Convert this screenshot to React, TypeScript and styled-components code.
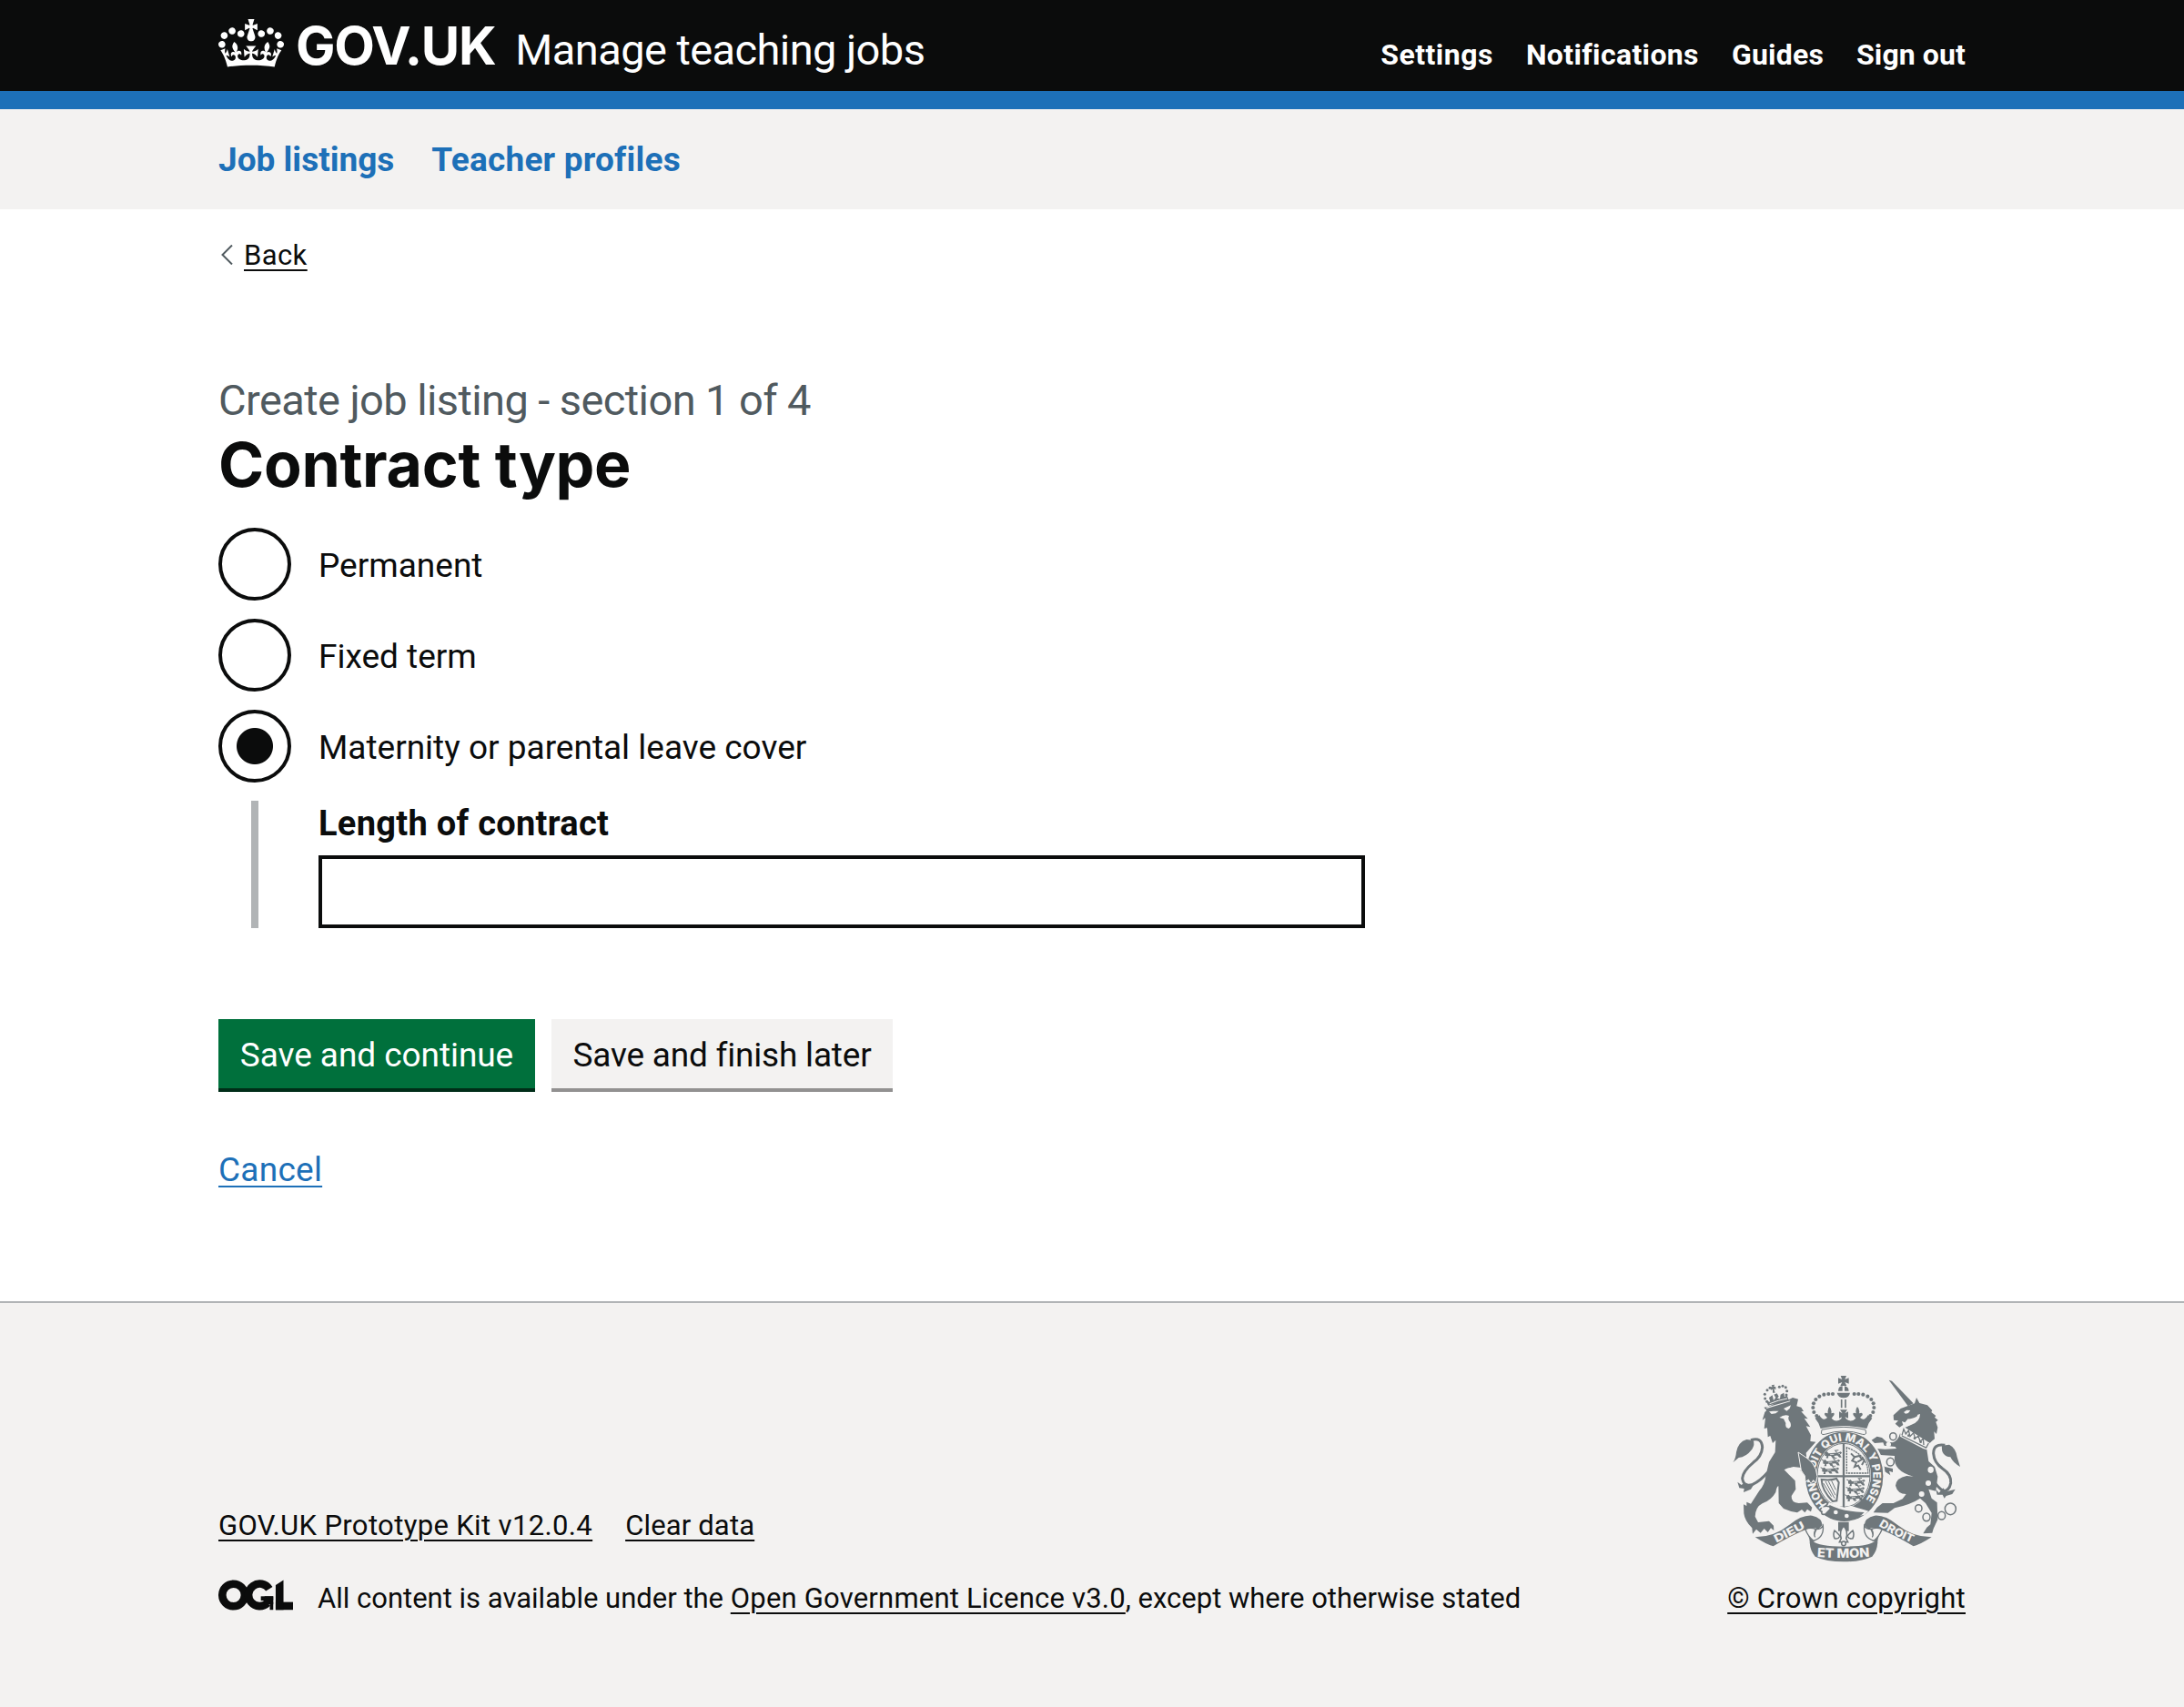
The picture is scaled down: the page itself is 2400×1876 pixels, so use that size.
import React, { useState } from 'react';
import styled, { createGlobalStyle, css } from 'styled-components';

const ink = '#0b0c0c';
const blue = '#1d70b8';
const pale = '#f3f2f1';
const crest = '#6f777b';

const GlobalStyle = createGlobalStyle`
  body {
    margin: 0;
    background: #fff;
    color: ${ink};
    font-family: Roboto, 'Liberation Sans', sans-serif;
  }
`;

const Page = styled.div`
  display: flex;
  flex-direction: column;
  min-height: 1876px;
`;

/* Header */

const Header = styled.header`
  box-sizing: border-box;
  height: 120px;
  padding: 20px 240px 0;
  display: flex;
  align-items: baseline;
  justify-content: space-between;
  background: ${ink};
  border-bottom: 20px solid ${blue};
  color: #fff;
`;

const Brand = styled.div`
  display: flex;
  align-items: baseline;
`;

const CrownMark = styled.svg`
  align-self: flex-start;
  width: 72px;
  height: 53px;
  margin: 1px 13px 0 0;
  fill: currentColor;
`;

const Wordmark = styled.span`
  font: 700 58px/60px Inter, sans-serif;
  letter-spacing: -1.3px;
  margin-right: 22px;
`;

const Service = styled.span`
  font-size: 47px;
  line-height: 50px;
  letter-spacing: -0.58px;
`;

const Account = styled.nav`
  display: flex;
  gap: 36px;
`;

const AccountLink = styled.a<{ $tracking: number }>`
  font-size: 32px;
  line-height: 40px;
  font-weight: 700;
  letter-spacing: ${(p) => p.$tracking}px;
`;

const PrimaryNav = styled.nav`
  box-sizing: border-box;
  height: 110px;
  padding: 31px 240px 0;
  display: flex;
  gap: 41px;
  background: ${pale};
`;

const PrimaryLink = styled.a<{ $tracking?: number }>`
  color: ${blue};
  font-size: 37px;
  line-height: 50px;
  font-weight: 700;
  letter-spacing: ${(p) => p.$tracking ?? 0}px;
`;

/* Links */

const underlined = css`
  text-decoration: underline;
  text-decoration-thickness: 2px;
  text-underline-offset: 5px;
`;

const Link = styled.a<{ $tracking?: number }>`
  ${underlined}
  letter-spacing: ${(p) => p.$tracking ?? 0}px;
`;

/* Main */

const Main = styled.main`
  box-sizing: border-box;
  height: 1200px;
  padding: 31px 240px 0;
`;

const BackLink = styled.div`
  display: flex;
  align-items: center;
  gap: 12px;
  padding-left: 3px;
  margin-bottom: 109px;
  font-size: 31px;
  line-height: 40px;
`;

const Chevron = styled.svg`
  width: 13px;
  height: 22px;
  margin-bottom: 2px;
  fill: none;
  stroke: #505a5f;
  stroke-width: 2;
`;

const Caption = styled.div`
  color: #505a5f;
  font-size: 47px;
  line-height: 60px;
  letter-spacing: -0.59px;
`;

const Title = styled.h1`
  margin: 0 0 30px;
  font: 700 68px/80px Inter, sans-serif;
  letter-spacing: -0.3px;
`;

const Radios = styled.div`
  display: flex;
  flex-direction: column;
  gap: 20px;
`;

const RadioRow = styled.label`
  display: flex;
  align-items: center;
  gap: 30px;
  height: 80px;
`;

const RadioInput = styled.input`
  appearance: none;
  flex: none;
  box-sizing: border-box;
  width: 80px;
  height: 80px;
  margin: 0;
  border: 4px solid ${ink};
  border-radius: 50%;
  background: #fff;

  &:checked {
    background: radial-gradient(circle, ${ink} 19.5px, #fff 20.5px);
  }
`;

const RadioText = styled.span`
  padding-top: 3px;
  font-size: 37px;
  line-height: 40px;
`;

const Conditional = styled.div`
  box-sizing: border-box;
  width: 1224px;
  height: 140px;
  margin-left: 36px;
  padding: 5px 0 0 66px;
  border-left: 8px solid #b1b4b6;
  display: flex;
  flex-direction: column;
  gap: 15px;
`;

const FieldLabel = styled.label`
  font-size: 38px;
  line-height: 40px;
  font-weight: 700;
  letter-spacing: 0.3px;
`;

const TextInput = styled.input`
  box-sizing: border-box;
  width: 100%;
  height: 80px;
  margin: 0;
  padding: 10px;
  border: 4px solid ${ink};
  border-radius: 0;
  background: #fff;
  font: 37px Roboto, sans-serif;
`;

const Actions = styled.div`
  display: flex;
  gap: 18px;
  margin: 100px 0 66px;
`;

const Button = styled.button<{ $secondary?: boolean }>`
  box-sizing: border-box;
  width: ${(p) => (p.$secondary ? 375 : 348)}px;
  height: 80px;
  padding: 3px 0 0;
  border: 0;
  border-bottom: 4px solid ${(p) => (p.$secondary ? '#929191' : '#002d18')};
  background: ${(p) => (p.$secondary ? pale : '#00703c')};
  color: ${(p) => (p.$secondary ? ink : '#fff')};
  font: 37px/40px Roboto, sans-serif;
  letter-spacing: ${(p) => (p.$secondary ? -0.2 : -0.06)}px;
  white-space: nowrap;
`;

const Cancel = styled(Link)`
  display: inline-block;
  color: ${blue};
  font-size: 37px;
  line-height: 40px;
`;

/* Footer */

const Footer = styled.footer`
  flex: 1;
  padding: 0 240px 99px;
  border-top: 2px solid #b1b4b6;
  background: ${pale};
  display: flex;
  justify-content: space-between;
  align-items: flex-end;
  font-size: 31px;
  line-height: 40px;
`;

const FooterMeta = styled.div`
  display: flex;
  flex-direction: column;
  gap: 40px;
`;

const FooterLinks = styled.div`
  display: flex;
  gap: 36px;
`;

const Licence = styled.div`
  display: flex;
  align-items: flex-start;
  gap: 27px;
`;

const LicenceText = styled.span`
  letter-spacing: 0;
`;

const OglMark = styled.svg`
  width: 82px;
  height: 34px;
  margin-top: -1px;
`;

const Copyright = styled.div`
  display: flex;
  flex-direction: column;
  align-items: flex-end;
  gap: 18px;
`;

const Arms = styled.svg`
  width: 260px;
  height: 209px;
  font-family: Inter, sans-serif;
  font-weight: 800;
`;

const Crown = () => (
  <CrownMark viewBox="0 0 132 97" aria-hidden="true">
    <path
      fillRule="evenodd"
      d="M25 30.2c3.5 1.5 7.7-.2 9.1-3.7 1.5-3.6-.2-7.8-3.9-9.2-3.6-1.4-7.6.3-9.1 3.9-1.4 3.5.3 7.5 3.9 9zM9 39.5c3.6 1.5 7.8-.2 9.2-3.7 1.5-3.6-.2-7.8-3.9-9.1-3.6-1.5-7.6.2-9.1 3.8-1.4 3.5.3 7.5 3.8 9zM4.4 57.2c3.5 1.5 7.7-.2 9.1-3.8 1.5-3.6-.2-7.7-3.9-9.1-3.5-1.5-7.6.3-9.1 3.8-1.4 3.5.3 7.6 3.9 9.1zm38.3-21.4c3.5 1.5 7.7-.2 9.1-3.8 1.5-3.6-.2-7.7-3.9-9.1-3.6-1.5-7.6.3-9.1 3.8-1.3 3.6.4 7.7 3.9 9.1zm64.4-5.6c-3.6 1.5-7.8-.2-9.1-3.7-1.5-3.6.2-7.8 3.8-9.2 3.6-1.4 7.7.3 9.2 3.9 1.3 3.5-.4 7.5-3.9 9zm15.9 9.3c-3.6 1.5-7.7-.2-9.1-3.7-1.5-3.6.2-7.8 3.7-9.1 3.6-1.5 7.7.2 9.2 3.8 1.5 3.5-.3 7.5-3.8 9zm4.7 17.7c-3.6 1.5-7.8-.2-9.2-3.8-1.5-3.6.2-7.7 3.9-9.1 3.6-1.5 7.7.3 9.2 3.8 1.3 3.5-.4 7.6-3.9 9.1zM89.3 35.8c-3.6 1.5-7.8-.2-9.2-3.8-1.4-3.6.2-7.7 3.9-9.1 3.6-1.5 7.7.3 9.2 3.8 1.4 3.6-.3 7.7-3.9 9.1zM69.7 17.7l8.9 4.7V9.3l-8.9 2.8c-.2-.3-.5-.6-.9-.9L72.4 0H59.6l3.5 11.2c-.3.3-.6.5-.9.9l-8.8-2.8v13.1l8.8-4.7c.3.3.6.7.9.9l-5 15.4v.1c-.2.8-.4 1.6-.4 2.4 0 4.1 3.1 7.5 7 8.1h.2c.3 0 .7.1 1 .1.4 0 .7 0 1-.1h.2c4-.6 7.1-4.1 7.1-8.1 0-.8-.1-1.7-.4-2.4V34l-5.1-15.4c.4-.2.7-.6 1-.9zM66 92.8c16.9 0 32.8 1.1 47.1 3.2 4-16.9 8.9-26.7 14-33.5l-9.6-3.4c1 4.9 1.1 7.2 0 10.2-1.5-1.4-3-4.3-4.2-8.7L108.6 76c2.8-2 5-3.2 7.5-3.3-4.4 9.4-10 11.9-13.6 11.2-4.3-.8-6.3-4.6-5.6-7.9 1-4.7 5.7-5.9 8-.5 4.3-8.7-3-11.4-7.6-8.8 7.1-7.2 7.9-13.5 2.1-21.1-8 6.1-8.1 12.3-4.5 20.8-4.7-5.4-12.1-2.5-9.5 6.2 3.4-5.2 7.9-2 7.2 3.1-.6 4.3-6.4 7.8-13.5 7.2-10.3-.9-10.9-8-11.2-13.8 2.5-.5 7.1 1.8 11 7.3L80.2 60c-4.1 4.4-8 5.3-12.3 5.4 1.4-4.4 8-11.6 8-11.6H55.5s6.4 7.2 7.9 11.6c-4.2-.1-8-1-12.3-5.4l1.4 16.4c3.9-5.5 8.5-7.7 10.9-7.3-.3 5.8-.9 12.8-11.1 13.8-7.2.6-12.9-2.9-13.5-7.2-.7-5 3.8-8.3 7.1-3.1 2.7-8.7-4.6-11.6-9.4-6.2 3.7-8.5 3.6-14.7-4.6-20.8-5.8 7.6-5 13.9 2.2 21.1-4.7-2.6-11.9.1-7.7 8.8 2.3-5.5 7.1-4.2 8.1.5.7 3.3-1.3 7.1-5.7 7.9-3.5.7-9-1.8-13.5-11.2 2.5.1 4.7 1.3 7.5 3.3l-4.7-15.4c-1.2 4.4-2.7 7.2-4.3 8.7-1.1-3-.9-5.3 0-10.2l-9.5 3.4c5 6.9 9.9 16.7 14 33.5 14.8-2.1 30.8-3.2 47.7-3.2z"
    />
  </CrownMark>
);

/* Open ring, hooked ring and an angled bar, as in the licence symbol. */
const Ogl = () => (
  <OglMark viewBox="0 0 483.2 195.7" aria-hidden="true">
    <g fill="none" stroke={ink} strokeWidth="50.7">
      <circle cx="97.8" cy="97.8" r="72.5" />
      <path d="M329 58.5A72.5 72.5 0 1 0 318 149" />
    </g>
    <g fill={ink}>
      <rect x="275" y="105.7" width="80" height="27.6" />
      <rect x="299" y="105.7" width="56" height="52" />
      <rect x="333" y="140" width="22" height="53.5" />
      <rect x="370.8" y="142.8" width="112.4" height="50.7" />
      <polygon points="370.8,193 370.8,32.4 421.5,0.1 421.5,193" />
    </g>
  </OglMark>
);

const crownDots = [
  [402, 126], [388, 126], [373, 128], [358, 134], [346, 144], [339, 157], [337, 171], [340, 186], [349, 198],
];
const lionDots = [
  [186, 113], [195, 106], [226, 103], [237, 100], [247, 104], [251, 116], [178, 127], [179, 141], [185, 151], [249, 129],
];
const chain = [
  [601, 266, 11], [592, 350, 12], [725, 376, 12], [685, 503, 11], [711, 532, 12], [761, 527, 12], [790, 505, 18],
];

/* One heraldic beast, drawn small, repeated in rows on the shield. */
const Passant = ({ x, y }: { x: number; y: number }) => (
  <g transform={`translate(${x} ${y}) scale(1.25 1.15)`}>
    <path
      d="M0 12V3L6 0L10 5L34 3L42 0L45 4L40 8L44 17H38L33 11L24 12L27 18H20L16 12L9 13V19H3L5 13Z"
      fill={crest}
    />
    <path d="M32 3L27 -3L36 -4M1 3L-4 0M10 8H30" fill="none" stroke={crest} strokeWidth="2.5" />
    <path d="M14 8H24M36 6H40" stroke={pale} strokeWidth="2" />
  </g>
);

const CoatOfArms = () => (
  <Arms viewBox="60 60 780 627" role="img" aria-label="Royal coat of arms">
    <defs>
      <path id="garter" d="M382 490A96 116 0 1 1 493 493" />
      <path id="ribbonLeft" d="M216 617Q264 594 326 560" />
      <path id="ribbonMid" d="M350 663Q438 670 530 662" />
      <path id="ribbonRight" d="M553 560Q606 594 676 622" />
    </defs>

    {/* lion */}
    <g fill={crest}>
      <path d="M175 170L190 168Q225 148 260 143L270 138L288 143L283 166L298 170L306 183L298 184L320 208L308 206L328 235L314 232L330 262L328 282L346 284L330 302L314 320L316 338Q336 350 345 370L350 398L345 425L338 412L330 425L322 408L312 418L310 398L300 382L290 374Q262 362 242 376L258 392L278 412L280 440L266 462Q264 484 290 486L318 484L334 500L330 514L318 506L310 517L300 507L285 517Q262 514 240 504L224 486L223 430Q218 428 214 450Q200 476 170 487Q148 498 146 530L156 549L192 545L207 560L208 576L198 568L188 582L176 570L164 584L150 572L138 587L136 568Q112 545 109 520L108 490L118 495L118 482L132 488L160 445Q178 425 182 392L192 350L212 318L214 278L204 288L196 264L188 268L186 238L176 240L180 205L170 212L178 186L184 180Z" />
      <path d="M73 352Q82 340 84 318Q90 284 118 276L140 279Q146 292 136 308Q116 334 92 336Z" />
      <path d="M88 416L101 426L112 418L128 426L146 418L132 440L108 450L110 438L94 436Z" />
    </g>
    <path
      d="M132 278Q168 266 170 302Q168 332 140 352Q106 380 104 404Q108 434 138 424Q164 412 188 384"
      fill="none"
      stroke={crest}
      strokeWidth="9"
    />
    <g fill={pale}>
      <path d="M192 184L206 182L224 182L214 190L200 192ZM240 174L264 163L260 174L250 182Z" />
      <path d="M226 204Q242 192 258 198Q252 208 262 220Q268 234 257 240Q244 238 247 222L240 208Z" />
      <path d="M248 374L272 366L304 370L296 378L276 376L286 388L268 384L266 396Z" />
      <path d="M183 170L262 148L261 151L184 174Z" />
    </g>
    <g fill={crest}>
      {lionDots.map(([x, y]) => (
        <circle key={`${x}-${y}`} cx={x} cy={y} r="4.5" />
      ))}
      <path d="M200 97L210 95L208 102L214 102V112L208 108L212 122L204 122L204 110L198 113L197 103L203 103Z" />
      <path d="M189 164L183 149L196 152L192 138L203 130L207 147L214 138L208 128L218 124L224 134L219 140L228 142L230 128L241 122L243 136L251 130L257 146Z" />
    </g>
    <path d="M194 158Q222 146 252 141" fill="none" stroke={pale} strokeWidth="3" />

    {/* unicorn */}
    <g fill={crest}>
      <path d="M587 80L597 83L668 157L650 166Z" />
      <path d="M652 164L672 157L678 138L688 156L714 163L730 180L727 186L742 198L738 203L749 212L742 218L748 236L744 258L736 250L738 274L728 282L722 288L640 236Q672 226 688 196Q664 210 650 208L640 220L630 216L634 228L622 236L608 224L618 214L603 212L602 196L626 174Z" />
      <path d="M624 256L712 308L718 348L738 366L748 398L742 446L718 440L728 470L746 484L748 540L734 570L730 584L700 586L712 566L724 556L728 518L708 486L690 470Q660 490 606 502L584 518L536 517L548 500L566 486L602 486L632 472L644 456Q616 456 609 428Q612 402 646 396L668 398Q600 380 606 330L570 328L552 326L552 346L574 366L600 372L600 384L588 380L592 394L574 382L570 392L562 372L540 346L528 340L528 322L546 306L574 308L612 306L608 300L572 296L568 286L540 288L530 278L548 266L564 270L580 284L600 286Q618 280 624 256Z" />
      <path d="M822 366Q798 352 790 334Q758 330 762 296L786 293Q808 304 812 334Z" />
      <path d="M742 440L752 452L766 436L776 448L806 440L796 456L776 462L770 470L764 458L746 458Z" />
    </g>
    <path
      d="M772 295Q734 288 734 322Q736 352 764 372Q794 392 791 420Q786 446 766 446Q744 430 734 410"
      fill="none"
      stroke={crest}
      strokeWidth="9"
    />
    <g fill={pale}>
      <path d="M636 186L646 179L658 180L651 189L642 191ZM690 192Q690 218 660 228L640 236L662 218Q678 208 682 194Z" />
      <path d="M628 238L636 236L720 288L722 296L712 310L700 306L624 266Z" />
    </g>
    <path d="M630 264L710 303L718 288M630 262L636 242L643 258L652 246L657 266L668 254L674 272L684 264L690 282L700 274L702 294" fill="none" stroke={crest} strokeWidth="4" />
    <circle cx="652" cy="263" r="4" fill={crest} />
    <circle cx="672" cy="272" r="4" fill={crest} />
    <circle cx="692" cy="284" r="4" fill={crest} />
    {chain.map(([x, y, r]) => (
      <ellipse key={`${x}-${y}`} cx={x} cy={y} rx={r} ry={r + 1} fill={pale} stroke={crest} strokeWidth="4.5" />
    ))}
    <circle cx="717" cy="420" r="9" fill={pale} />
    <circle cx="695" cy="456" r="9" fill={pale} />
    <circle cx="586" cy="292" r="8" fill={pale} />

    {/* garter and shield */}
    <ellipse cx="440" cy="397" rx="135" ry="155" fill={pale} />
    <ellipse cx="440" cy="397" rx="128" ry="149" fill={crest} />
    <ellipse cx="438" cy="394" rx="90" ry="108" fill={pale} />
    <text fill={pale} fontSize="36">
      <textPath href="#garter" textLength="520" lengthAdjust="spacingAndGlyphs">
        HONI SOIT QUI MAL Y PENSE
      </textPath>
    </text>
    <path d="M438 288V500M350 397H525" stroke={crest} strokeWidth="7" />
    <ellipse cx="438" cy="394" rx="87" ry="105" fill="none" stroke={crest} strokeWidth="3" />
    <Passant x={376} y={316} />
    <Passant x={370} y={342} />
    <Passant x={367} y={368} />
    <Passant x={453} y={408} />
    <Passant x={451} y={433} />
    <Passant x={447} y={458} />
    <g fill="none" stroke={crest}>
      <path d="M448 302V387H518Q520 330 448 302Z" strokeWidth="4" strokeDasharray="7 2" />
      <path d="M462 322L474 334L466 346L480 352L474 366L486 362L494 376M474 334L490 330L498 342L484 350M498 360L506 346L500 336" strokeWidth="6" />
      <path d="M365 408Q394 412 414 405L422 418L415 478L402 480Q366 444 365 408Z" strokeWidth="6" />
      <path d="M378 414L408 470M388 414L411 460M398 412L412 442M371 420L398 464" strokeWidth="3" />
    </g>

    {/* lion's forepaw over the garter */}
    <path
      d="M288 318L318 338Q338 352 346 374L351 398L346 420L338 410L330 422L322 408L312 416L310 396L298 378Z"
      fill={crest}
      stroke={pale}
      strokeWidth="3"
    />

    {/* belt and buckle */}
    <path d="M370 502Q430 542 508 524L520 512L506 508L480 500L462 494L440 500L392 484Z" fill={pale} />
    <path d="M392 492Q436 514 506 516Q480 546 430 542Q402 536 376 520Z" fill={crest} />
    <circle cx="412" cy="516" r="7" fill={pale} />
    <circle cx="448" cy="528" r="7" fill={pale} />
    <path d="M368 488Q386 476 384 490L376 496Q396 494 394 506L378 522Q362 526 366 514Q354 508 366 502" fill={pale} stroke={crest} strokeWidth="5" />

    {/* imperial crown */}
    <path d="M362 240Q438 224 514 240L516 264Q510 270 500 266Q438 236 376 266Q366 268 360 262Z" fill={pale} />
    <g fill={crest}>
      <path d="M428 66H447L442 78L455 73V92L442 87L448 99H427L433 87L420 92V73L433 78Z" />
      <path d="M420 116Q420 100 434 100V116ZM441 100Q455 102 455 116H441ZM416 122H459Q456 139 438 139Q420 139 416 122Z" />
      {crownDots.map(([x, y]) => (
        <g key={`${x}-${y}`}>
          <circle cx={x} cy={y} r="6.2" />
          <circle cx={875 - x} cy={y} r="6.2" />
        </g>
      ))}
      <path d="M344 206L358 196Q370 218 384 204L376 196Q372 184 386 190Q384 176 391 168Q400 176 397 190Q410 184 406 196L398 206Q412 222 430 208L434 196L440 196L446 208Q464 222 478 206L470 196Q466 184 479 190Q476 176 483 168Q492 176 489 190Q502 184 500 196L492 204Q506 218 518 196L532 206Q518 222 514 240Q438 222 362 240Q358 222 344 206Z" />
      <path d="M426 178H450L442 190L453 184V206L440 200V206H436V200L423 206V184L434 190Z" />
    </g>
    <path d="M431 144V172M444 144V172" stroke={crest} strokeWidth="5" />
    <path d="M366 244Q438 226 510 244L512 256Q507 262 500 259Q438 238 376 259Q368 262 364 256Z" fill={pale} stroke={crest} strokeWidth="3" />

    {/* ribbon */}
    <g fill={crest}>
      <path d="M146 598Q208 598 258 558Q300 524 334 527Q366 534 368 558L354 572Q336 562 306 576Q262 594 206 628Q190 626 146 598Z" />
      <path d="M728 598Q666 598 616 558Q574 524 540 527Q508 534 506 558L520 572Q538 562 568 576Q612 594 668 628Q684 626 728 598Z" />
      <path d="M310 574Q328 600 326 616Q328 644 344 662Q380 679 438 679Q496 679 532 662Q548 644 550 616Q548 600 566 574L558 572Q530 600 540 612Q522 628 438 629Q354 628 338 612Q346 600 318 572Z" />
    </g>
    <g fill={pale} stroke={crest} strokeWidth="4">
      <path d="M312 572Q330 564 346 572Q338 586 344 596Q352 606 338 610Q318 592 312 572Z" />
      <path d="M564 572Q546 564 530 572Q538 586 532 596Q524 606 538 610Q558 592 564 572Z" />
      <path d="M338 610Q374 600 370 560Q364 572 348 572Q338 592 344 598" />
      <path d="M538 610Q502 600 506 560Q512 572 528 572Q538 592 532 598" />
    </g>
    <g fill={pale} fontSize="37">
      <text>
        <textPath href="#ribbonLeft" textLength="108" lengthAdjust="spacingAndGlyphs">
          DIEU
        </textPath>
      </text>
      <text fontSize="42">
        <textPath href="#ribbonMid" textLength="174" lengthAdjust="spacingAndGlyphs">
          ET MON
        </textPath>
      </text>
      <text>
        <textPath href="#ribbonRight" textLength="124" lengthAdjust="spacingAndGlyphs">
          DROIT
        </textPath>
      </text>
    </g>

    {/* badge below the garter */}
    <path d="M420 548H455V578H446L438 564L430 578H420Z" fill={crest} />
    <g fill={pale} stroke={crest} strokeWidth="4.5">
      <path d="M432 602Q418 584 408 576Q402 588 408 602Q420 606 424 596M444 602Q458 584 468 576Q474 588 468 602Q456 606 452 596" />
      <path d="M438 562Q454 578 446 602L452 614H424L430 602Q422 578 438 562Z" />
      <circle cx="438" cy="619" r="7" />
    </g>
  </Arms>
);

const accountLinks: [string, number][] = [
  ['Settings', 0.5],
  ['Notifications', 0.35],
  ['Guides', 0.2],
  ['Sign out', 0.1],
];

const contractTypes = ['Permanent', 'Fixed term', 'Maternity or parental leave cover'];

export default function App() {
  const [selected, setSelected] = useState(contractTypes[2]);
  return (
    <Page>
      <GlobalStyle />
      <Header>
        <Brand>
          <Crown />
          <Wordmark>GOV.UK</Wordmark>
          <Service>Manage teaching jobs</Service>
        </Brand>
        <Account>
          {accountLinks.map(([label, tracking]) => (
            <AccountLink key={label} $tracking={tracking}>
              {label}
            </AccountLink>
          ))}
        </Account>
      </Header>
      <PrimaryNav>
        <PrimaryLink>Job listings</PrimaryLink>
        <PrimaryLink $tracking={0.2}>Teacher profiles</PrimaryLink>
      </PrimaryNav>
      <Main>
        <BackLink>
          <Chevron viewBox="0 0 13 22" aria-hidden="true">
            <path d="M12 0.5L1.5 11L12 21.5" />
          </Chevron>
          <Link $tracking={0.4}>Back</Link>
        </BackLink>
        <Caption>Create job listing - section 1 of 4</Caption>
        <Title>Contract type</Title>
        <Radios>
          {contractTypes.map((type) => (
            <RadioRow key={type}>
              <RadioInput
                type="radio"
                name="contract-type"
                checked={selected === type}
                onChange={() => setSelected(type)}
              />
              <RadioText>{type}</RadioText>
            </RadioRow>
          ))}
          <Conditional>
            <FieldLabel htmlFor="contract-length">Length of contract</FieldLabel>
            <TextInput id="contract-length" type="text" />
          </Conditional>
        </Radios>
        <Actions>
          <Button>Save and continue</Button>
          <Button $secondary>Save and finish later</Button>
        </Actions>
        <Cancel $tracking={0.25}>Cancel</Cancel>
      </Main>
      <Footer>
        <FooterMeta>
          <FooterLinks>
            <Link $tracking={0.36}>GOV.UK Prototype Kit v12.0.4</Link>
            <Link $tracking={0.15}>Clear data</Link>
          </FooterLinks>
          <Licence>
            <Ogl />
            <LicenceText>
              All content is available under the <Link $tracking={0.2}>Open Government Licence v3.0</Link>, except where
              otherwise stated
            </LicenceText>
          </Licence>
        </FooterMeta>
        <Copyright>
          <CoatOfArms />
          <Link $tracking={0.3}>© Crown copyright</Link>
        </Copyright>
      </Footer>
    </Page>
  );
}
